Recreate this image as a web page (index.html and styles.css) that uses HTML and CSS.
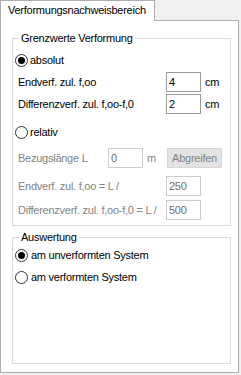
FILE: index.html
```html
<!DOCTYPE html>
<html>
<head>
<meta charset="utf-8">
<link rel="stylesheet" href="styles.css">
</head>
<body>
<div class="tabs"><div class="tab">Verformungsnachweisbereich</div></div>
<div class="panel">
  <div class="group g1">
    <div class="legend">Grenzwerte Verformung</div>
    <div class="radio r-abs"><span class="dot on"></span>absolut</div>
    <div class="row r1"><span class="lbl">Endverf. zul. f,oo</span><span class="inp">4</span><span class="unit">cm</span></div>
    <div class="row r2"><span class="lbl">Differenzverf. zul. f,oo-f,0</span><span class="inp">2</span><span class="unit">cm</span></div>
    <div class="radio r-rel"><span class="dot"></span>relativ</div>
    <div class="row dis r3"><span class="lbl short">Bezugslänge L</span><span class="inp">0</span><span class="unit um">m</span><span class="btn">Abgreifen</span></div>
    <div class="row dis r4"><span class="lbl">Endverf. zul. f,oo = L /</span><span class="inp">250</span></div>
    <div class="row dis r5"><span class="lbl">Differenzverf. zul. f,oo-f,0 = L /</span><span class="inp">500</span></div>
  </div>
  <div class="group g2">
    <div class="legend">Auswertung</div>
    <div class="radio r-unv"><span class="dot on"></span>am unverformten System</div>
    <div class="radio r-ver"><span class="dot"></span>am verformten System</div>
  </div>
</div>
</body>
</html>
```
FILE: styles.css
```css
* { box-sizing: border-box; }
html, body { margin: 0; padding: 0; }
body {
  background: #f0f0f0;
  font-family: "Liberation Sans", Arial, sans-serif;
  font-size: 11px;
  letter-spacing: -0.25px;
  color: #000;
  width: 241px;
  height: 375px;
  overflow: hidden;
}
.tabs { display: flex; }
.tab {
  position: relative;
  z-index: 1;
  width: 155px;
  height: 21px;
  margin-bottom: -1px;
  background: #fff;
  border: 1px solid #adadad;
  border-bottom: none;
  padding-left: 7px;
  line-height: 19px;
}
.panel {
  width: 239px;
  height: 353px;
  background: #fff;
  border: 1px solid #adadad;
  display: flex;
  flex-direction: column;
}
.group {
  border: 1px solid #dcdcdc;
  margin: 0 7px 0 11px;
}
.g1 { margin-top: 17px; padding-bottom: 5px; }
.g2 { margin-top: 11px; margin-bottom: 8px; flex: 1; }
.legend {
  width: max-content;
  margin: -7px 0 0 6px;
  padding: 0 2px;
  background: #fff;
  line-height: 13px;
}
.radio {
  display: flex;
  align-items: center;
  height: 16px;
  padding-left: 2px;
}
.dot {
  width: 13px;
  height: 13px;
  border: 1px solid #333;
  border-radius: 50%;
  background: #fff;
  margin-right: 2px;
  display: flex;
  align-items: center;
  justify-content: center;
  flex: none;
}
.dot.on::after {
  content: "";
  width: 7px;
  height: 7px;
  border-radius: 50%;
  background: #000;
}
.r-abs { margin-top: 7px; }
.r-rel { margin-top: 10px; }
.r-unv { margin-top: 3px; }
.r-ver { margin-top: 6px; }
.g2 .dot { margin-right: 3px; }

.row {
  display: flex;
  align-items: center;
  height: 20px;
  padding-left: 5px;
}
.r1 { margin-top: 4px; }
.r2 { margin-top: 2px; }
.r3 { margin-top: 8px; }
.r4 { margin-top: 8px; }
.r5 { margin-top: 4px; }
.lbl { width: 148px; flex: none; white-space: nowrap; }
.lbl.short { width: 90px; }
.inp {
  width: 35px;
  height: 20px;
  border: 1px solid #9a9a9a;
  padding-left: 2px;
  line-height: 18px;
  flex: none;
}
.unit { margin-left: 4px; }
.um { width: 20px; }
.dis { color: #838383; }
.dis .inp { border-color: #cccccc; color: #6d6d6d; }
.btn {
  width: 55px;
  height: 20px;
  background: #e3e3e3;
  border: 1px solid #d6d6d6;
  text-align: center;
  line-height: 18px;
  color: #838383;
}
```
